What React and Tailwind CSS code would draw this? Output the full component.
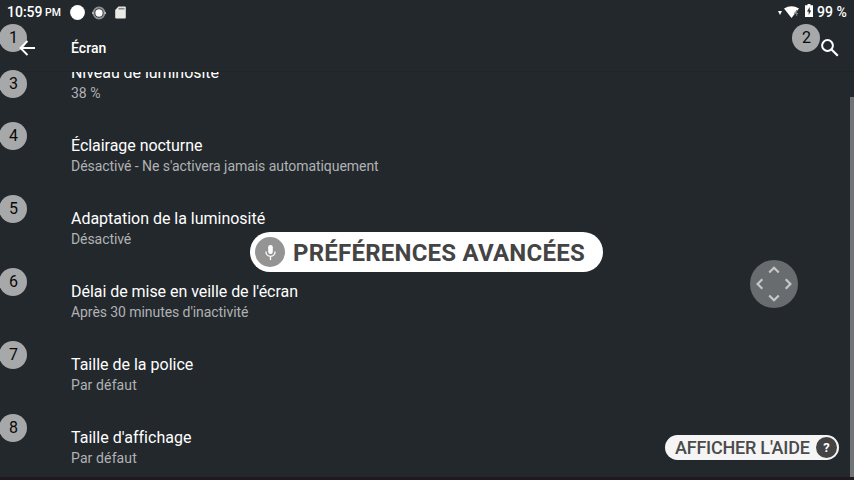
const rows = [
  { n: 3, title: "Niveau de luminosité", sub: "38 %", titleTrack: "tracking-[-0.05px]", subTrack: "" },
  { n: 4, title: "Éclairage nocturne", sub: "Désactivé - Ne s'activera jamais automatiquement", titleTrack: "tracking-[-0.04px]", subTrack: "tracking-[-0.055px]" },
  { n: 5, title: "Adaptation de la luminosité", sub: "Désactivé", titleTrack: "tracking-[-0.02px]", subTrack: "tracking-[-0.08px]" },
  { n: 6, title: "Délai de mise en veille de l'écran", sub: "Après 30 minutes d'inactivité", titleTrack: "tracking-[-0.04px]", subTrack: "tracking-[-0.07px]" },
  { n: 7, title: "Taille de la police", sub: "Par défaut", titleTrack: "", subTrack: "tracking-[0.12px]" },
  { n: 8, title: "Taille d'affichage", sub: "Par défaut", titleTrack: "tracking-[0.03px]", subTrack: "tracking-[0.12px]" },
];

function Badge({ n, className }) {
  return (
    <span className={`absolute flex h-7 w-7 items-center justify-center rounded-full bg-[#a7a8aa] pl-px text-base leading-none text-[#080808] ${className}`}>
      {n}
    </span>
  );
}

function StatusBar() {
  return (
    <div className="flex h-6 shrink-0 items-center pl-[7px] pr-2 text-sm font-medium leading-6">
      <span className="w-[38px]">10:59</span>
      <span className="mt-[2px] w-[25px] text-[10.5px]">PM</span>
      <svg className="mt-px h-[15px] w-[15px]" viewBox="0 0 15 15"><circle cx="7.5" cy="7.5" r="7.4" fill="#fff" /></svg>
      <svg className="ml-[7px] mt-px h-[14px] w-[14px]" viewBox="0 0 14 14">
        <circle cx="7" cy="7" r="5.500" fill="none" stroke="#8d9092" strokeWidth="2" />
        <circle cx="7" cy="7" r="3.700" fill="#fff" />
        <path d="M0 7h2M12 7h2" stroke="#b0b2b4" strokeWidth="2" />
      </svg>
      <svg className="ml-[9px] mt-px h-[13px] w-[11px]" viewBox="0 0 11 13">
        <path d="M3.500 0.500h6.300q1 0 1 1v10q0 1-1 1H1.200q-1 0-1-1V4z" fill="#e9e9e5" />
        <path d="M3.500 2.700h6" stroke="#85888a" strokeWidth="1.600" />
      </svg>
      <div className="grow" />
      <svg className="mt-[2px] h-1 w-1" viewBox="0 0 4 4"><path d="M0 0h4L2 4z" fill="#fff" /></svg>
      <svg className="ml-[2px] h-3 w-[15px]" viewBox="0 0 15 12">
        <path d="M0 2.500Q7.500-2 15 2.500L7.500 12z" fill="#fff" />
        <path d="M13 4L10.300 7.500H14M12.700 4v6" fill="none" stroke="#7b7f82" strokeWidth="1" />
      </svg>
      <svg className="mb-[3px] ml-[6px] h-[13px] w-2" viewBox="0 0 8 13">
        <path d="M2.500 0h3v1.300H8V13H0V1.300h2.500z" fill="#fff" />
        <path d="M4.700 3L2 7.500h1.700V11L6.200 6.500H4.700z" fill="#23282c" />
      </svg>
      <span className="ml-1 w-[29px] whitespace-nowrap">99 %</span>
    </div>
  );
}

export default function App() {
  return (
    <div className="relative flex h-[480px] w-[854px] flex-col overflow-hidden bg-[#23282c] font-[Roboto,sans-serif] text-white">
      <StatusBar />
      <header className="relative flex h-12 shrink-0 items-center pl-[19px] pr-[15px] shadow-[inset_0_-1px_0_#1f2427]">
        <Badge n={1} className="-left-px top-0" />
        <svg className="relative h-4 w-4" viewBox="0 0 16 16"><path d="M16 8H1.500M8.500 1L1.500 8l7 7" fill="none" stroke="#fff" strokeWidth="1.900" /></svg>
        <h1 className="ml-9 grow text-sm font-medium tracking-[0.06px]">Écran</h1>
        <Badge n={2} className="left-[792px] top-0" />
        <svg className="relative h-[18px] w-[18px]" viewBox="0 0 18 18"><circle cx="6.500" cy="6.500" r="5.400" fill="none" stroke="#fff" strokeWidth="2" /><path d="M10.500 10.500l6.300 6.300" stroke="#fff" strokeWidth="2.200" /></svg>
      </header>
      <main className="h-[405px] shrink-0 overflow-hidden">
        <div className="-mt-[24px]">
          {rows.map((r) => (
            <section key={r.n} className="h-[73px] pl-[71px] pt-[14px]">
              <h2 className={`h-[21px] text-base leading-[21px] ${r.titleTrack}`}>{r.title}</h2>
              <p className={`text-sm leading-[21px] text-[#b0b2b4] ${r.subTrack}`}>{r.sub}</p>
            </section>
          ))}
        </div>
      </main>
      <footer className="h-[3px] shrink-0 bg-[#1d191f]" />
      <Badge n={3} className="-left-px top-[70px]" />
      <Badge n={4} className="-left-px top-[122px]" />
      <Badge n={5} className="-left-px top-[195px]" />
      <Badge n={6} className="-left-px top-[268px]" />
      <Badge n={7} className="-left-px top-[341px]" />
      <Badge n={8} className="-left-px top-[414px]" />
      <div className="absolute right-0 top-[97px] h-[380px] w-1 bg-[#717476]" />
      <div className="absolute left-[250px] top-[232px] flex h-10 w-[353px] items-center rounded-full bg-white pl-[5px]">
        <span className="flex h-[30px] w-[30px] items-center justify-center rounded-full bg-[#949494]">
          <svg className="h-[15px] w-[11px]" viewBox="0 0 11 15"><rect x="3.200" y="0" width="4.600" height="9" rx="2.300" fill="#fff" /><path d="M1 6.500v.5a4.500 4.300 0 0 0 9 0v-.5M5.500 11.500V15" fill="none" stroke="#fff" strokeWidth="1.300" /></svg>
        </span>
        <span className="ml-2 mt-[2px] whitespace-nowrap text-2xl font-bold tracking-[0.23px] text-[#444]">PRÉFÉRENCES AVANCÉES</span>
      </div>
      <div className="absolute left-[750px] top-[260px] h-12 w-12 rounded-full bg-[#686c6e]">
        <svg className="h-12 w-12" viewBox="0 0 48 48"><path d="M19.200 12.500L24 7.800l4.800 4.700M19.200 35.500L24 40.200l4.800-4.700M12.300 19.200L7.600 24l4.700 4.800M35.700 19.200L40.400 24l-4.700 4.800" fill="none" stroke="#c6c7c8" strokeWidth="2.200" /></svg>
      </div>
      <div className="absolute left-[665px] top-[435px] flex h-[25px] w-[174px] items-center rounded-full bg-[#f5f5f5] pl-[10px]">
        <span className="w-[141px] whitespace-nowrap text-lg font-medium leading-[25px] tracking-[-0.22px] text-[#4a4a4a]">AFFICHER L'AIDE</span>
        <span className="flex h-[21px] w-[21px] shrink-0 items-center justify-center rounded-full bg-[#444] text-[13px] font-bold leading-none text-white">?</span>
      </div>
    </div>
  );
}
